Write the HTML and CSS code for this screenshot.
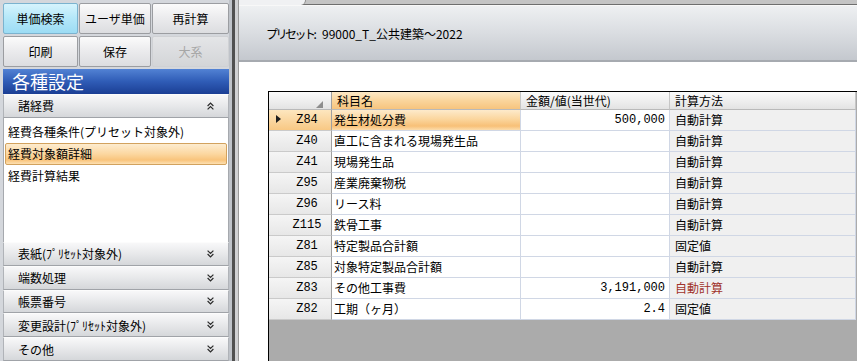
FILE: index.html
```html
<!DOCTYPE html>
<html lang="ja">
<head>
    <meta charset="UTF-8">
    <title>諸経費 - 経費対象額詳細</title>
    <link rel="stylesheet" href="styles.css">
</head>
<body>
<div class="app">
    <aside class="side">
        <div class="toolbar">
            <button class="tool-btn active">単価検索</button>
            <button class="tool-btn">ユーザ単価</button>
            <button class="tool-btn">再計算</button>
            <button class="tool-btn">印刷</button>
            <button class="tool-btn">保存</button>
            <button class="tool-btn" disabled>大系</button>
        </div>

        <div class="side-title">各種設定</div>

        <div class="group-head">
            <span>諸経費</span>
            <svg class="chev" width="7" height="8" viewBox="0 0 7 8"><path d="M0.6 4 3.5 1.1 6.4 4M0.6 7.4 3.5 4.5 6.4 7.4" fill="none" stroke="#2b2b2b" stroke-width="1.2"/></svg>
        </div>
        <ul class="group-list">
            <li>経費各種条件(プリセット対象外)</li>
            <li class="selected">経費対象額詳細</li>
            <li>経費計算結果</li>
        </ul>

        <div class="group-head">
            <span>表紙(ﾌﾟﾘｾｯﾄ対象外)</span>
            <svg class="chev" width="7" height="8" viewBox="0 0 7 8"><path d="M0.6 0.6 3.5 3.5 6.4 0.6M0.6 4 3.5 6.9 6.4 4" fill="none" stroke="#2b2b2b" stroke-width="1.2"/></svg>
        </div>
        <div class="group-head">
            <span>端数処理</span>
            <svg class="chev" width="7" height="8" viewBox="0 0 7 8"><path d="M0.6 0.6 3.5 3.5 6.4 0.6M0.6 4 3.5 6.9 6.4 4" fill="none" stroke="#2b2b2b" stroke-width="1.2"/></svg>
        </div>
        <div class="group-head">
            <span>帳票番号</span>
            <svg class="chev" width="7" height="8" viewBox="0 0 7 8"><path d="M0.6 0.6 3.5 3.5 6.4 0.6M0.6 4 3.5 6.9 6.4 4" fill="none" stroke="#2b2b2b" stroke-width="1.2"/></svg>
        </div>
        <div class="group-head">
            <span>変更設計(ﾌﾟﾘｾｯﾄ対象外)</span>
            <svg class="chev" width="7" height="8" viewBox="0 0 7 8"><path d="M0.6 0.6 3.5 3.5 6.4 0.6M0.6 4 3.5 6.9 6.4 4" fill="none" stroke="#2b2b2b" stroke-width="1.2"/></svg>
        </div>
        <div class="group-head">
            <span>その他</span>
            <svg class="chev" width="7" height="8" viewBox="0 0 7 8"><path d="M0.6 0.6 3.5 3.5 6.4 0.6M0.6 4 3.5 6.9 6.4 4" fill="none" stroke="#2b2b2b" stroke-width="1.2"/></svg>
        </div>
    </aside>

    <div class="splitter"></div>

    <main class="main">
        <div class="tab-strip"><span class="tab"></span></div>

        <div class="preset-bar">
            <span class="preset-label">プリセット:</span>
            <span>99000_T_公共建築～2022</span>
        </div>

        <div class="content">
            <div class="grid">
                <table>
                    <colgroup>
                        <col class="col-head">
                        <col class="col-name">
                        <col class="col-amount">
                        <col class="col-method">
                    </colgroup>
                    <thead>
                        <tr>
                            <th class="corner"><svg width="7" height="7" viewBox="0 0 7 7"><path d="M7 0V7H0z" fill="#8d8d8d"/></svg></th>
                            <th class="sorted">科目名</th>
                            <th>金額/値(当世代)</th>
                            <th>計算方法</th>
                        </tr>
                    </thead>
                    <tbody>
                        <tr class="current">
                            <td class="row-head"><span class="mark"><svg width="5" height="8" viewBox="0 0 5 8"><path d="M0 0 5 4 0 8z" fill="#1e1e1e"/></svg></span><span class="code">Z84</span></td>
                            <td class="name">発生材処分費</td>
                            <td class="amount">500,000</td>
                            <td class="method">自動計算</td>
                        </tr>
                        <tr>
                            <td class="row-head"><span class="mark"></span><span class="code">Z40</span></td>
                            <td class="name">直工に含まれる現場発生品</td>
                            <td class="amount"></td>
                            <td class="method">自動計算</td>
                        </tr>
                        <tr>
                            <td class="row-head"><span class="mark"></span><span class="code">Z41</span></td>
                            <td class="name">現場発生品</td>
                            <td class="amount"></td>
                            <td class="method">自動計算</td>
                        </tr>
                        <tr>
                            <td class="row-head"><span class="mark"></span><span class="code">Z95</span></td>
                            <td class="name">産業廃棄物税</td>
                            <td class="amount"></td>
                            <td class="method">自動計算</td>
                        </tr>
                        <tr>
                            <td class="row-head"><span class="mark"></span><span class="code">Z96</span></td>
                            <td class="name">リース料</td>
                            <td class="amount"></td>
                            <td class="method">自動計算</td>
                        </tr>
                        <tr>
                            <td class="row-head"><span class="mark"></span><span class="code">Z115</span></td>
                            <td class="name">鉄骨工事</td>
                            <td class="amount"></td>
                            <td class="method">自動計算</td>
                        </tr>
                        <tr>
                            <td class="row-head"><span class="mark"></span><span class="code">Z81</span></td>
                            <td class="name">特定製品合計額</td>
                            <td class="amount"></td>
                            <td class="method">固定値</td>
                        </tr>
                        <tr>
                            <td class="row-head"><span class="mark"></span><span class="code">Z85</span></td>
                            <td class="name">対象特定製品合計額</td>
                            <td class="amount"></td>
                            <td class="method">自動計算</td>
                        </tr>
                        <tr>
                            <td class="row-head"><span class="mark"></span><span class="code">Z83</span></td>
                            <td class="name">その他工事費</td>
                            <td class="amount">3,191,000</td>
                            <td class="method changed">自動計算</td>
                        </tr>
                        <tr>
                            <td class="row-head"><span class="mark"></span><span class="code">Z82</span></td>
                            <td class="name">工期（ヶ月）</td>
                            <td class="amount">2.4</td>
                            <td class="method">固定値</td>
                        </tr>
                    </tbody>
                </table>
            </div>
        </div>
    </main>
</div>
</body>
</html>
```

FILE: styles.css
```css
* {
    margin: 0;
    padding: 0;
    box-sizing: border-box;
}

html, body {
    width: 857px;
    height: 361px;
    overflow: hidden;
}

body {
    font-family: "Noto Sans CJK JP", "Noto Sans", sans-serif;
    font-size: 12px;
    color: #000;
    background: #d4d7dc;
}

.app {
    display: flex;
    height: 361px;
}

/* left panel */
.side {
    width: 229px;
    flex-shrink: 0;
    padding-left: 3px;
    background: #d4d7dc;
    display: flex;
    flex-direction: column;
}

.toolbar {
    display: grid;
    grid-template-columns: 75px 72px 77px;
    grid-template-rows: 31px 31px;
    gap: 2px 1px;
    padding: 3px 0 2px;
}

.tool-btn {
    font: inherit;
    color: #000;
    border: 1px solid #9b9da1;
    border-radius: 2px;
    background: linear-gradient(#fbfbfb, #ececee 45%, #dcdde0);
    cursor: pointer;
}

.tool-btn.active {
    border-color: #7bb3cf;
    background: linear-gradient(#d6f4fd, #b6e8f9 45%, #9cdcf4);
}

.tool-btn:disabled {
    color: #a6a6a6;
    border-color: #cfd1d4;
    background: linear-gradient(#e4e5e7, #d3d5d8);
    cursor: default;
}

.side-title {
    height: 25px;
    padding-left: 9px;
    font-size: 18px;
    line-height: 25px;
    color: #fff;
    background: linear-gradient(#5282d4, #2f5cb6 50%, #1b3e94);
}

.group-head {
    height: 24px;
    padding: 0 14px;
    display: flex;
    justify-content: space-between;
    align-items: center;
    background: linear-gradient(#f8f8f9, #e7e8ea 50%, #d5d7da);
    border: 1px solid #b0b3b8;
    border-top-color: #fcfcfc;
    border-bottom-color: #a0a3a8;
}

.group-list {
    list-style: none;
    height: 125px;
    padding: 3px 1px 0;
    background: #fff;
    border-left: 1px solid #a6a9ae;
    border-right: 1px solid #a6a9ae;
}

.group-list li {
    height: 22px;
    line-height: 20px;
    padding-left: 2px;
    border: 1px solid transparent;
    border-radius: 2px;
    white-space: nowrap;
}

.group-list li.selected {
    border-color: #d2a25e;
    background: linear-gradient(#fdeccf, #fcd7a0 50%, #f9c47c 80%, #fde0b2);
}

.splitter {
    width: 9px;
    flex-shrink: 0;
    background: linear-gradient(90deg, #bfc3c9 0 3px, #505050 3px 6px, #d0d1d3 6px);
}

/* right panel */
.main {
    flex: 1;
    min-width: 0;
    display: flex;
    flex-direction: column;
    background: #fff;
    border-left: 1px solid #9a9a9a;
}

.tab-strip {
    height: 5px;
    background: #c4c4c4;
    border-bottom: 1px solid #6e6e6e;
}

.tab {
    display: block;
    width: 67px;
    height: 5px;
    background: #f0f1f3;
    border-right: 1px solid #8a8a8a;
    border-bottom-right-radius: 5px;
}

.preset-bar {
    height: 57px;
    padding-left: 27px;
    display: flex;
    align-items: center;
    background: linear-gradient(#eef0f2, #dadde1 50%, #c4c8ce);
    border-top: 1px solid #f8f8f8;
    border-bottom: 2px solid #a6aab0;
    white-space: nowrap;
}

.preset-label {
    width: 56px;
    letter-spacing: -2.5px;
}

.content {
    flex: 1;
    display: flex;
    padding: 29px 0 0 29px;
}

.grid {
    flex: 1;
    overflow: hidden;
    background: #ababab;
    border-top: 1px solid #000;
    border-left: 1px solid #000;
}

.grid table {
    width: 587px;
    table-layout: fixed;
    border-collapse: separate;
    border-spacing: 0;
}

.col-head { width: 63px; }
.col-name { width: 189px; }
.col-amount { width: 149px; }
.col-method { width: 186px; }

.grid th,
.grid td {
    line-height: 20px;
    padding: 0;
    text-align: left;
    font-weight: normal;
    white-space: nowrap;
    overflow: hidden;
    border-right: 1px solid #d0d7e5;
    border-bottom: 1px solid #d0d7e5;
}

.grid thead th {
    line-height: 17px;
    padding-left: 5px;
    background: linear-gradient(#fbfbfb, #efefef 50%, #e3e3e3);
    border-right-color: #c6c6c6;
    border-bottom-color: #b9b9b9;
}

.grid thead th.sorted {
    background: linear-gradient(#fde9c7, #fad59c 50%, #f7c47e);
}

.grid thead th.corner {
    padding: 0 8px 0 0;
    text-align: right;
    border-right-color: #a0a0a0;
}

.grid thead th.corner svg {
    vertical-align: -2px;
}

.grid .row-head {
    font-family: "Liberation Mono", monospace;
    font-size: 12px;
    background: linear-gradient(#f5f5f5, #e7e7e7);
    border-right-color: #a0a0a0;
    border-bottom-color: #cacaca;
}

.mark {
    display: inline-block;
    width: 14px;
    padding-left: 7px;
}

.code {
    display: inline-block;
    width: 48px;
    text-align: center;
}

.grid .name {
    padding-left: 2px;
    background: #fff;
}

.grid .amount {
    padding-right: 4px;
    text-align: right;
    font-family: "Liberation Mono", monospace;
    font-size: 12px;
    background: #fff;
}

.grid .method {
    padding-left: 5px;
    background: #f0f0f0;
}

.grid .method.changed {
    color: #a0322a;
}

.grid tr.current .row-head {
    background: linear-gradient(#fde6bf, #f8c884);
}

.grid tr.current .name {
    background: linear-gradient(#fdeacb, #fbd69e 45%, #f8c077 80%, #fcdcab);
}
```
